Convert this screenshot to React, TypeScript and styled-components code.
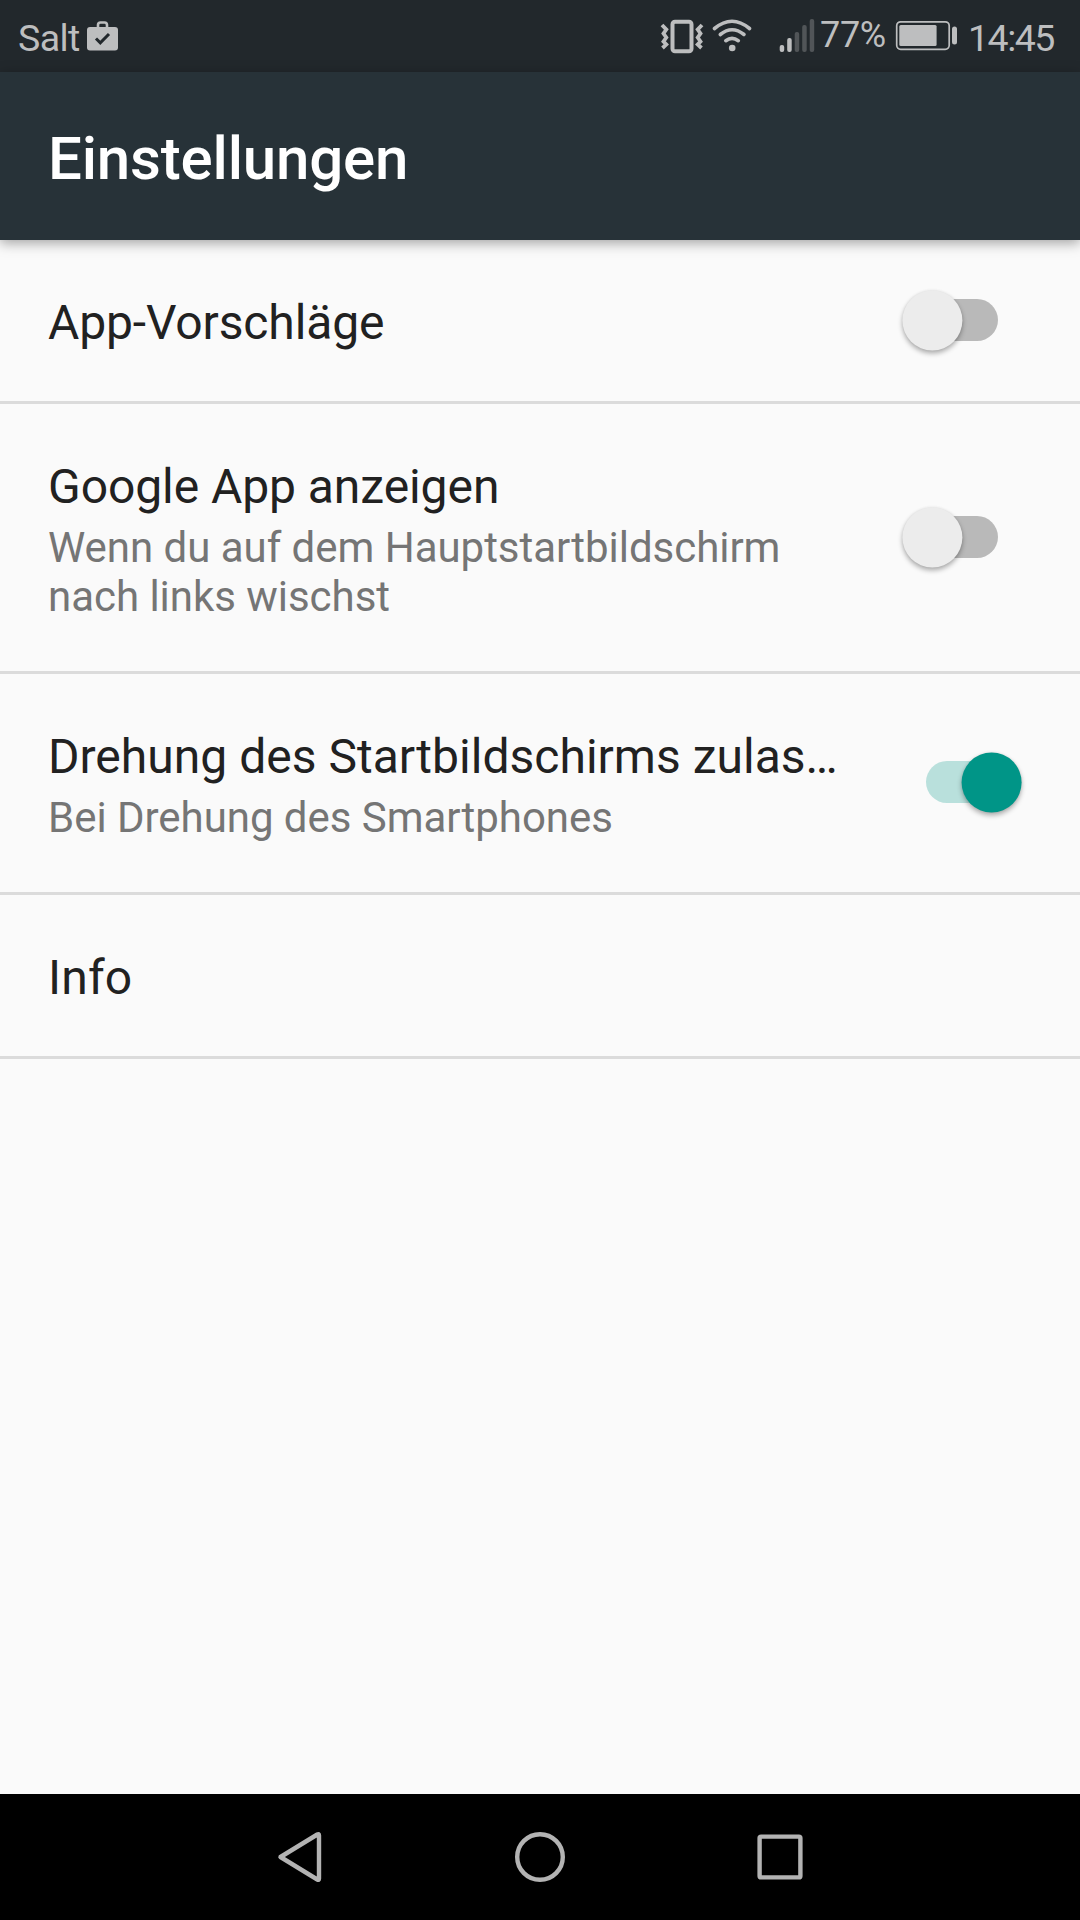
import React, { useState } from "react";
import styled, { createGlobalStyle } from "styled-components";

const GlobalStyle = createGlobalStyle`
  *, *::before, *::after { box-sizing: border-box; }
  body { margin: 0; background: #fafafa; font-family: Roboto, "Liberation Sans", sans-serif; }
`;

const statusColor = "#bdbebf";

const Screen = styled.div`
  display: flex;
  flex-direction: column;
  width: 1080px;
  height: 1920px;
  overflow: hidden;
  background: #fafafa;
`;

const StatusBar = styled.header`
  display: flex;
  justify-content: space-between;
  flex: none;
  height: 72px;
  padding: 0 24px 0 18px;
  background: #22282c;
  color: ${statusColor};
`;

const StatusGroup = styled.div`
  display: flex;
  align-items: flex-start;
`;

const StatusText = styled.span<{ $size: number; $top: number; $width: number; $spacing: number }>`
  width: ${(p) => p.$width}px;
  padding-top: ${(p) => p.$top}px;
  font-size: ${(p) => p.$size}px;
  line-height: 44px;
  letter-spacing: ${(p) => p.$spacing}px;
  white-space: nowrap;
`;

const ClockLabel = styled.time`
  display: block;
  padding-left: 11px;
`;

const StatusIcon = styled.svg`
  display: block;
  flex: none;
  height: 72px;
`;

const AppBar = styled.div`
  position: relative;
  flex: none;
  height: 168px;
  padding: 52px 48px 0;
  background: #273238;
  box-shadow: 0 3px 12px rgba(0, 0, 0, 0.36);
`;

const AppTitle = styled.h1`
  margin: 0;
  color: #fff;
  font-size: 60px;
  font-weight: 500;
  line-height: 70px;
  letter-spacing: -0.17px;
`;

const List = styled.main`
  flex: 1;
`;

const Row = styled.div<{ $height: number }>`
  display: flex;
  align-items: flex-start;
  justify-content: space-between;
  height: ${(p) => p.$height}px;
  padding: 0 58px 0 48px;
  border-bottom: 3px solid #dbdbdb;
`;

const Labels = styled.div`
  width: 796px;
  padding-top: 55px;
`;

const Title = styled.div<{ $tracking: number }>`
  color: #212121;
  font-size: 48px;
  line-height: 56px;
  letter-spacing: ${(p) => p.$tracking}px;
  white-space: nowrap;
`;

const Summary = styled.div`
  padding-top: 8px;
  color: #757575;
  font-size: 42px;
  line-height: 49px;
  letter-spacing: -0.03px;
`;

const Toggle = styled.button<{ $top: number }>`
  position: relative;
  display: flex;
  align-items: center;
  justify-content: center;
  width: 120px;
  height: 60px;
  margin: ${(p) => p.$top}px 0 0;
  padding: 0;
  border: 0;
  background: none;
`;

const Track = styled.span<{ $on: boolean }>`
  width: 72px;
  height: 42px;
  border-radius: 21px;
  background: ${(p) => (p.$on ? "#b9e0dc" : "#b9b9b9")};
`;

const Thumb = styled.span<{ $on: boolean }>`
  position: absolute;
  top: 0;
  left: 0;
  width: 60px;
  height: 60px;
  border-radius: 50%;
  background: ${(p) => (p.$on ? "#009587" : "#ececec")};
  box-shadow: 0 3px 5px rgba(0, 0, 0, 0.3), 0 0 3px rgba(0, 0, 0, 0.08);
  transform: translate(${(p) => (p.$on ? 59.6 : 0.4)}px, 0.5px);
`;

const NavBar = styled.nav`
  display: flex;
  align-items: center;
  justify-content: center;
  gap: 180px;
  flex: none;
  height: 126px;
  background: #000;
`;

const NavIcon = styled.svg`
  display: block;
  width: 60px;
  height: 60px;
  fill: none;
  stroke: #b3b3b3;
  stroke-width: 4.4;
  stroke-linejoin: round;
`;

type Setting = { title: string; summary?: string; height: number; tracking: number; value?: boolean };

const settings: Setting[] = [
  { title: "App-Vorschläge", height: 164, tracking: -0.13, value: false },
  {
    title: "Google App anzeigen",
    summary: "Wenn du auf dem Hauptstartbildschirm nach links wischst",
    height: 270,
    tracking: -0.07,
    value: false,
  },
  {
    title: "Drehung des Startbildschirms zulas…",
    summary: "Bei Drehung des Smartphones",
    height: 221,
    tracking: 0.02,
    value: true,
  },
  { title: "Info", height: 164, tracking: 0.2 },
];

const rowBorder = 3;
const toggleHeight = 60;

function SettingRow({ title, summary, height, tracking, value }: Setting) {
  const [on, setOn] = useState(value ?? false);
  return (
    <Row $height={height}>
      <Labels>
        <Title $tracking={tracking}>{title}</Title>
        {summary && <Summary>{summary}</Summary>}
      </Labels>
      {value !== undefined && (
        <Toggle
          $top={Math.floor((height - rowBorder - toggleHeight - 1) / 2)}
          role="switch"
          aria-checked={on}
          onClick={() => setOn(!on)}
        >
          <Track $on={on} />
          <Thumb $on={on} />
        </Toggle>
      )}
    </Row>
  );
}

const WorkIcon = () => (
  <StatusIcon width="32" viewBox="87 0 32 72">
    <rect x="87" y="27" width="31" height="23.5" rx="3" fill={statusColor} />
    <path d="M98 28V25Q98 22.5 100.500 22.500H104.500Q107 22.500 107 25V28" fill="none" stroke={statusColor} strokeWidth="2.6" />
    <path d="M96 38.500L100.300 42.800L109 34" fill="none" stroke="#22282c" strokeWidth="3" />
  </StatusIcon>
);

const VibrateIcon = () => (
  <StatusIcon width="52" viewBox="660 0 52 72" fill="none" stroke={statusColor}>
    <rect x="672.500" y="21.700" width="19" height="29.500" rx="2.500" strokeWidth="4" />
    <path d="M662 25L666.300 29.500L663.500 33.500L666.300 37.500L663.500 41.500L666.300 44.500L662.500 48" strokeWidth="3.800" />
    <path d="M702 25L697.700 29.500L700.500 33.500L697.700 37.500L700.500 41.500L697.700 44.500L701.500 48" strokeWidth="3.800" />
  </StatusIcon>
);

const WifiIcon = () => (
  <StatusIcon width="67" viewBox="712 0 67 72" fill="none" stroke={statusColor} strokeWidth="3.600" strokeLinecap="round">
    <path d="M714.500 28.500Q732 14 749.500 28.500" />
    <path d="M720.300 34.500Q732 25 744 34.500" />
    <path d="M725.800 40.700Q732 36 738.300 40.700" />
    <circle cx="732.200" cy="48" r="3.300" fill={statusColor} stroke="none" />
  </StatusIcon>
);

const signalBars = [
  { x: 779.7, y: 45, lit: true },
  { x: 787.2, y: 38, lit: true },
  { x: 794.7, y: 32, lit: false },
  { x: 802.2, y: 25, lit: false },
  { x: 809.7, y: 19, lit: false },
];

const SignalIcon = () => (
  <StatusIcon width="41" viewBox="779 0 41 72">
    {signalBars.map((b) => (
      <rect key={b.x} x={b.x} y={b.y} width="4.500" height={52 - b.y} rx="2" fill={b.lit ? statusColor : "#515558"} />
    ))}
  </StatusIcon>
);

const BatteryIcon = () => (
  <StatusIcon width="62" viewBox="895 0 62 72">
    <rect x="896.700" y="21.800" width="52.500" height="27.500" rx="4" fill="none" stroke={statusColor} strokeWidth="1.700" />
    <rect x="899.300" y="25" width="37.300" height="21" rx="1.500" fill={statusColor} />
    <rect x="952" y="26.500" width="5" height="18" rx="2.500" fill={statusColor} />
  </StatusIcon>
);

export default function App() {
  return (
    <Screen>
      <GlobalStyle />
      <StatusBar>
        <StatusGroup>
          <StatusText $size={37.5} $top={16} $width={69} $spacing={-0.6}>Salt</StatusText>
          <WorkIcon />
        </StatusGroup>
        <StatusGroup>
          <VibrateIcon />
          <WifiIcon />
          <SignalIcon />
          <StatusText $size={36} $top={13} $width={75} $spacing={-0.3}>77%</StatusText>
          <BatteryIcon />
          <StatusText $size={37.5} $top={16} $width={99} $spacing={-1.5}>
            <ClockLabel>14:45</ClockLabel>
          </StatusText>
        </StatusGroup>
      </StatusBar>
      <AppBar>
        <AppTitle>Einstellungen</AppTitle>
      </AppBar>
      <List>
        {settings.map((s) => (
          <SettingRow key={s.title} {...s} />
        ))}
      </List>
      <NavBar>
        <NavIcon viewBox="270 1827 60 60">
          <path d="M280.500 1857L317.300 1834.500Q319 1833.500 319 1835.500V1878.500Q319 1880.500 317.300 1879.500Z" />
        </NavIcon>
        <NavIcon viewBox="510 1827 60 60">
          <circle cx="540" cy="1857" r="22.800" />
        </NavIcon>
        <NavIcon viewBox="750 1827 60 60">
          <rect x="759.600" y="1836.600" width="40.800" height="40.800" rx="1.500" />
        </NavIcon>
      </NavBar>
    </Screen>
  );
}
